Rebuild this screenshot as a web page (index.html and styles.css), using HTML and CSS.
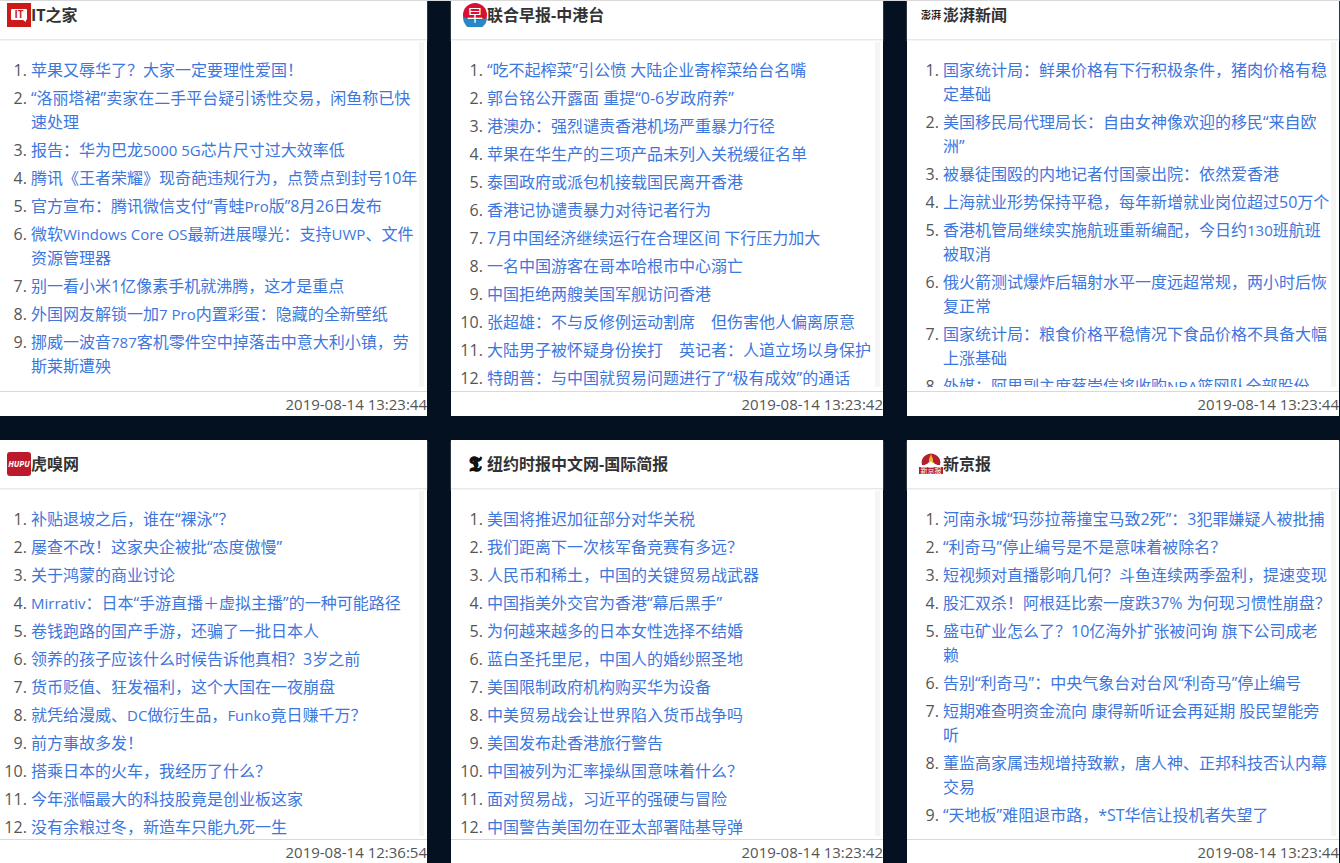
FILE: index.html
```html
<!DOCTYPE html>
<html lang="zh-CN">
<head>
  <meta charset="UTF-8" />
  <title>新闻聚合</title>
  <meta name="viewport" content="width=device-width, initial-scale=1.0"/>
  <link rel="stylesheet" href="styles.css">
</head>
<body>
  <div class="page">
    <main class="board">

      <section class="card">
        <header class="card-header">
          <svg class="logo" viewBox="0 0 24 24" aria-hidden="true">
            <rect width="24" height="24" fill="#cb1a17"/>
            <path d="M5 6h14a1 1 0 0 1 1 1v9a1 1 0 0 1-1 1v2l-3-2H5a1 1 0 0 1-1-1V7a1 1 0 0 1 1-1z" fill="#fff"/>
            <text class="logo-it" x="12" y="15" text-anchor="middle">IT</text>
          </svg>
          <h2>IT之家</h2>
        </header>
        <ol class="news">
          <li><a href="#">苹果又辱华了？大家一定要理性爱国！</a></li>
          <li><a href="#">“洛丽塔裙”卖家在二手平台疑引诱性交易，闲鱼称已快速处理</a></li>
          <li><a href="#">报告：华为巴龙<span class="en">5000 5G</span>芯片尺寸过大效率低</a></li>
          <li><a href="#">腾讯《王者荣耀》现奇葩违规行为，点赞点到封号10年</a></li>
          <li><a href="#">官方宣布：腾讯微信支付“青蛙<span class="en">Pro</span>版”8月26日发布</a></li>
          <li><a href="#">微软<span class="en">Windows Core OS</span>最新进展曝光：支持<span class="en">UWP</span>、文件资源管理器</a></li>
          <li><a href="#">别一看小米1亿像素手机就沸腾，这才是重点</a></li>
          <li><a href="#">外国网友解锁一加<span class="en">7 Pro</span>内置彩蛋：隐藏的全新壁纸</a></li>
          <li><a href="#">挪威一波音<span class="en">787</span>客机零件空中掉落击中意大利小镇，劳斯莱斯遭殃</a></li>
        </ol>
        <footer class="card-footer"><time>2019-08-14 13:23:44</time></footer>
      </section>

      <section class="card">
        <header class="card-header">
          <svg class="logo" viewBox="0 0 24 24" aria-hidden="true">
            <circle cx="12" cy="12" r="12" fill="#d80f35"/>
            <path d="M0 14Q12 19 24 15A12 12 0 0 1 0 14z" fill="#2a86c4"/>
            <text class="logo-zao" x="12" y="18" text-anchor="middle">早</text>
          </svg>
          <h2>联合早报-中港台</h2>
        </header>
        <ol class="news">
          <li><a href="#">“吃不起榨菜”引公愤 大陆企业寄榨菜给台名嘴</a></li>
          <li><a href="#">郭台铭公开露面 重提“0-6岁政府养”</a></li>
          <li><a href="#">港澳办：强烈谴责香港机场严重暴力行径</a></li>
          <li><a href="#">苹果在华生产的三项产品未列入关税缓征名单</a></li>
          <li><a href="#">泰国政府或派包机接载国民离开香港</a></li>
          <li><a href="#">香港记协谴责暴力对待记者行为</a></li>
          <li><a href="#">7月中国经济继续运行在合理区间 下行压力加大</a></li>
          <li><a href="#">一名中国游客在哥本哈根市中心溺亡</a></li>
          <li><a href="#">中国拒绝两艘美国军舰访问香港</a></li>
          <li><a href="#">张超雄：不与反修例运动割席　但伤害他人偏离原意</a></li>
          <li><a href="#">大陆男子被怀疑身份挨打　英记者：人道立场以身保护</a></li>
          <li><a href="#">特朗普：与中国就贸易问题进行了“极有成效”的通话</a></li>
        </ol>
        <footer class="card-footer"><time>2019-08-14 13:23:42</time></footer>
      </section>

      <section class="card">
        <header class="card-header">
          <svg class="logo" viewBox="0 0 24 24" aria-hidden="true">
            <text class="logo-pengpai" x="12" y="16" text-anchor="middle">澎湃</text>
          </svg>
          <h2>澎湃新闻</h2>
        </header>
        <ol class="news">
          <li><a href="#">国家统计局：鲜果价格有下行积极条件，猪肉价格有稳定基础</a></li>
          <li><a href="#">美国移民局代理局长：自由女神像欢迎的移民“来自欧洲”</a></li>
          <li><a href="#">被暴徒围殴的内地记者付国豪出院：依然爱香港</a></li>
          <li><a href="#">上海就业形势保持平稳，每年新增就业岗位超过50万个</a></li>
          <li><a href="#">香港机管局继续实施航班重新编配，今日约<span class="en">130</span>班航班被取消</a></li>
          <li><a href="#">俄火箭测试爆炸后辐射水平一度远超常规，两小时后恢复正常</a></li>
          <li><a href="#">国家统计局：粮食价格平稳情况下食品价格不具备大幅上涨基础</a></li>
          <li><a href="#">外媒：阿里副主席蔡崇信将收购<span class="en">NBA</span>篮网队全部股份</a></li>
        </ol>
        <footer class="card-footer"><time>2019-08-14 13:23:44</time></footer>
      </section>

      <section class="card">
        <header class="card-header">
          <svg class="logo" viewBox="0 0 24 24" aria-hidden="true">
            <rect width="24" height="24" rx="3" fill="#ba1a2b"/>
            <text class="logo-hupu" x="12" y="15" text-anchor="middle">HUPU</text>
          </svg>
          <h2>虎嗅网</h2>
        </header>
        <ol class="news">
          <li><a href="#">补贴退坡之后，谁在“裸泳”？</a></li>
          <li><a href="#">屡查不改！这家央企被批“态度傲慢”</a></li>
          <li><a href="#">关于鸿蒙的商业讨论</a></li>
          <li><a href="#"><span class="en">Mirrativ</span>：日本“手游直播＋虚拟主播”的一种可能路径</a></li>
          <li><a href="#">卷钱跑路的国产手游，还骗了一批日本人</a></li>
          <li><a href="#">领养的孩子应该什么时候告诉他真相？3岁之前</a></li>
          <li><a href="#">货币贬值、狂发福利，这个大国在一夜崩盘</a></li>
          <li><a href="#">就凭给漫威、<span class="en">DC</span>做衍生品，<span class="en">Funko</span>竟日赚千万？</a></li>
          <li><a href="#">前方事故多发！</a></li>
          <li><a href="#">搭乘日本的火车，我经历了什么？</a></li>
          <li><a href="#">今年涨幅最大的科技股竟是创业板这家</a></li>
          <li><a href="#">没有余粮过冬，新造车只能九死一生</a></li>
        </ol>
        <footer class="card-footer"><time>2019-08-14 12:36:54</time></footer>
      </section>

      <section class="card">
        <header class="card-header">
          <svg class="logo" viewBox="0 0 24 24" aria-hidden="true">
            <text class="logo-nyt" x="12" y="19" text-anchor="middle">𝕿</text>
          </svg>
          <h2>纽约时报中文网-国际简报</h2>
        </header>
        <ol class="news">
          <li><a href="#">美国将推迟加征部分对华关税</a></li>
          <li><a href="#">我们距离下一次核军备竞赛有多远？</a></li>
          <li><a href="#">人民币和稀土，中国的关键贸易战武器</a></li>
          <li><a href="#">中国指美外交官为香港“幕后黑手”</a></li>
          <li><a href="#">为何越来越多的日本女性选择不结婚</a></li>
          <li><a href="#">蓝白圣托里尼，中国人的婚纱照圣地</a></li>
          <li><a href="#">美国限制政府机构购买华为设备</a></li>
          <li><a href="#">中美贸易战会让世界陷入货币战争吗</a></li>
          <li><a href="#">美国发布赴香港旅行警告</a></li>
          <li><a href="#">中国被列为汇率操纵国意味着什么？</a></li>
          <li><a href="#">面对贸易战，习近平的强硬与冒险</a></li>
          <li><a href="#">中国警告美国勿在亚太部署陆基导弹</a></li>
        </ol>
        <footer class="card-footer"><time>2019-08-14 13:23:42</time></footer>
      </section>

      <section class="card">
        <header class="card-header">
          <svg class="logo" viewBox="0 0 24 24" aria-hidden="true">
            <path d="M3 13a9 9 0 0 1 4-10q5-3 10 0a9 9 0 0 1 4 10L17 13l-3-3h-4l-3 3z" fill="#b3202c"/>
            <path d="M12 2l2 5v4h-4V7z" fill="#e9b52c"/>
            <path d="M3 16l4-4 2 1 3-4 3 4 2-1 4 4z" fill="#fff"/>
            <rect y="15" width="24" height="7" fill="#b3202c"/>
            <text class="logo-bjnews" x="12" y="21" text-anchor="middle">新京报</text>
          </svg>
          <h2>新京报</h2>
        </header>
        <ol class="news">
          <li><a href="#">河南永城“玛莎拉蒂撞宝马致2死”：3犯罪嫌疑人被批捕</a></li>
          <li><a href="#">“利奇马”停止编号是不是意味着被除名？</a></li>
          <li><a href="#">短视频对直播影响几何？斗鱼连续两季盈利，提速变现</a></li>
          <li><a href="#">股汇双杀！阿根廷比索一度跌37% 为何现习惯性崩盘？</a></li>
          <li><a href="#">盛屯矿业怎么了？10亿海外扩张被问询 旗下公司成老赖</a></li>
          <li><a href="#">告别“利奇马”：中央气象台对台风“利奇马”停止编号</a></li>
          <li><a href="#">短期难查明资金流向 康得新听证会再延期 股民望能旁听</a></li>
          <li><a href="#">董监高家属违规增持致歉，唐人神、正邦科技否认内幕交易</a></li>
          <li><a href="#">“天地板”难阻退市路，*ST华信让投机者失望了</a></li>
        </ol>
        <footer class="card-footer"><time>2019-08-14 13:23:44</time></footer>
      </section>

    </main>
  </div>
</body>
</html>
```

FILE: styles.css
```css
:root {
  --bg: #041120;
  --link: #3d76dd;
  --text: #555;
  --title: #333;
  --line: #d9d9d9;
}

* {
  box-sizing: border-box;
  margin: 0;
  padding: 0;
}

body {
  background: var(--bg);
  color: var(--text);
  font-family: 'Open Sans', 'Noto Sans CJK SC', sans-serif;
  font-size: 16px;
  line-height: 24px;
}

.page {
  height: 100vh;
  overflow: hidden;
  border-top: 1px solid var(--line);
}

/* the board runs a little past the top left corner of the window */
.board {
  display: grid;
  grid-template-columns: repeat(3, minmax(0, 1fr));
  grid-template-rows: 425px 424px;
  gap: 24px;
  margin: -10px 1px 0 -5px;
}

.card {
  display: flex;
  flex-direction: column;
  background: #fff;
}

.card-header {
  display: flex;
  align-items: center;
  height: 49px;
  padding: 0 12px;
  border-bottom: 1px solid #e8e8e8;
  box-shadow: 0 1px 1px #f5f5f5;
}

.card-header h2 {
  color: var(--title);
  font-size: 16px;
  font-weight: bold;
}

.logo {
  width: 24px;
  height: 24px;
}

.logo-it {
  font: bold 10px 'Open Sans', sans-serif;
  fill: #cb1a17;
}

.logo-zao {
  font: 16px 'Noto Sans CJK SC', sans-serif;
  fill: #fff;
}

.logo-pengpai {
  font: bold 10px 'Noto Sans CJK SC', sans-serif;
  fill: #222;
}

.logo-hupu {
  font: italic bold 8px 'Open Sans', sans-serif;
  fill: #fff;
}

.logo-nyt {
  font: bold 20px 'DejaVu Sans', serif;
  fill: #111;
  stroke: #111;
  stroke-width: 1px;
}

.logo-bjnews {
  font: 7px 'Noto Sans CJK SC', sans-serif;
  fill: #fff;
}

.news {
  height: 345px;
  margin: 2px 3px 0 0;
  padding: 16px 0 0 36px;
  border-right: 5px solid #f5f5f5;
  overflow: hidden;
}

.news li {
  margin-bottom: 4px;
}

.news a {
  color: var(--link);
  text-decoration: none;
}

.news a:hover {
  text-decoration: underline;
}

/* latin words sit large next to the chinese at 16px */
.en {
  font-size: 15px;
}

.card-footer {
  height: 25px;
  margin-top: auto;
  border-top: 1px solid var(--line);
  font-size: 15px;
  text-align: right;
}
```
